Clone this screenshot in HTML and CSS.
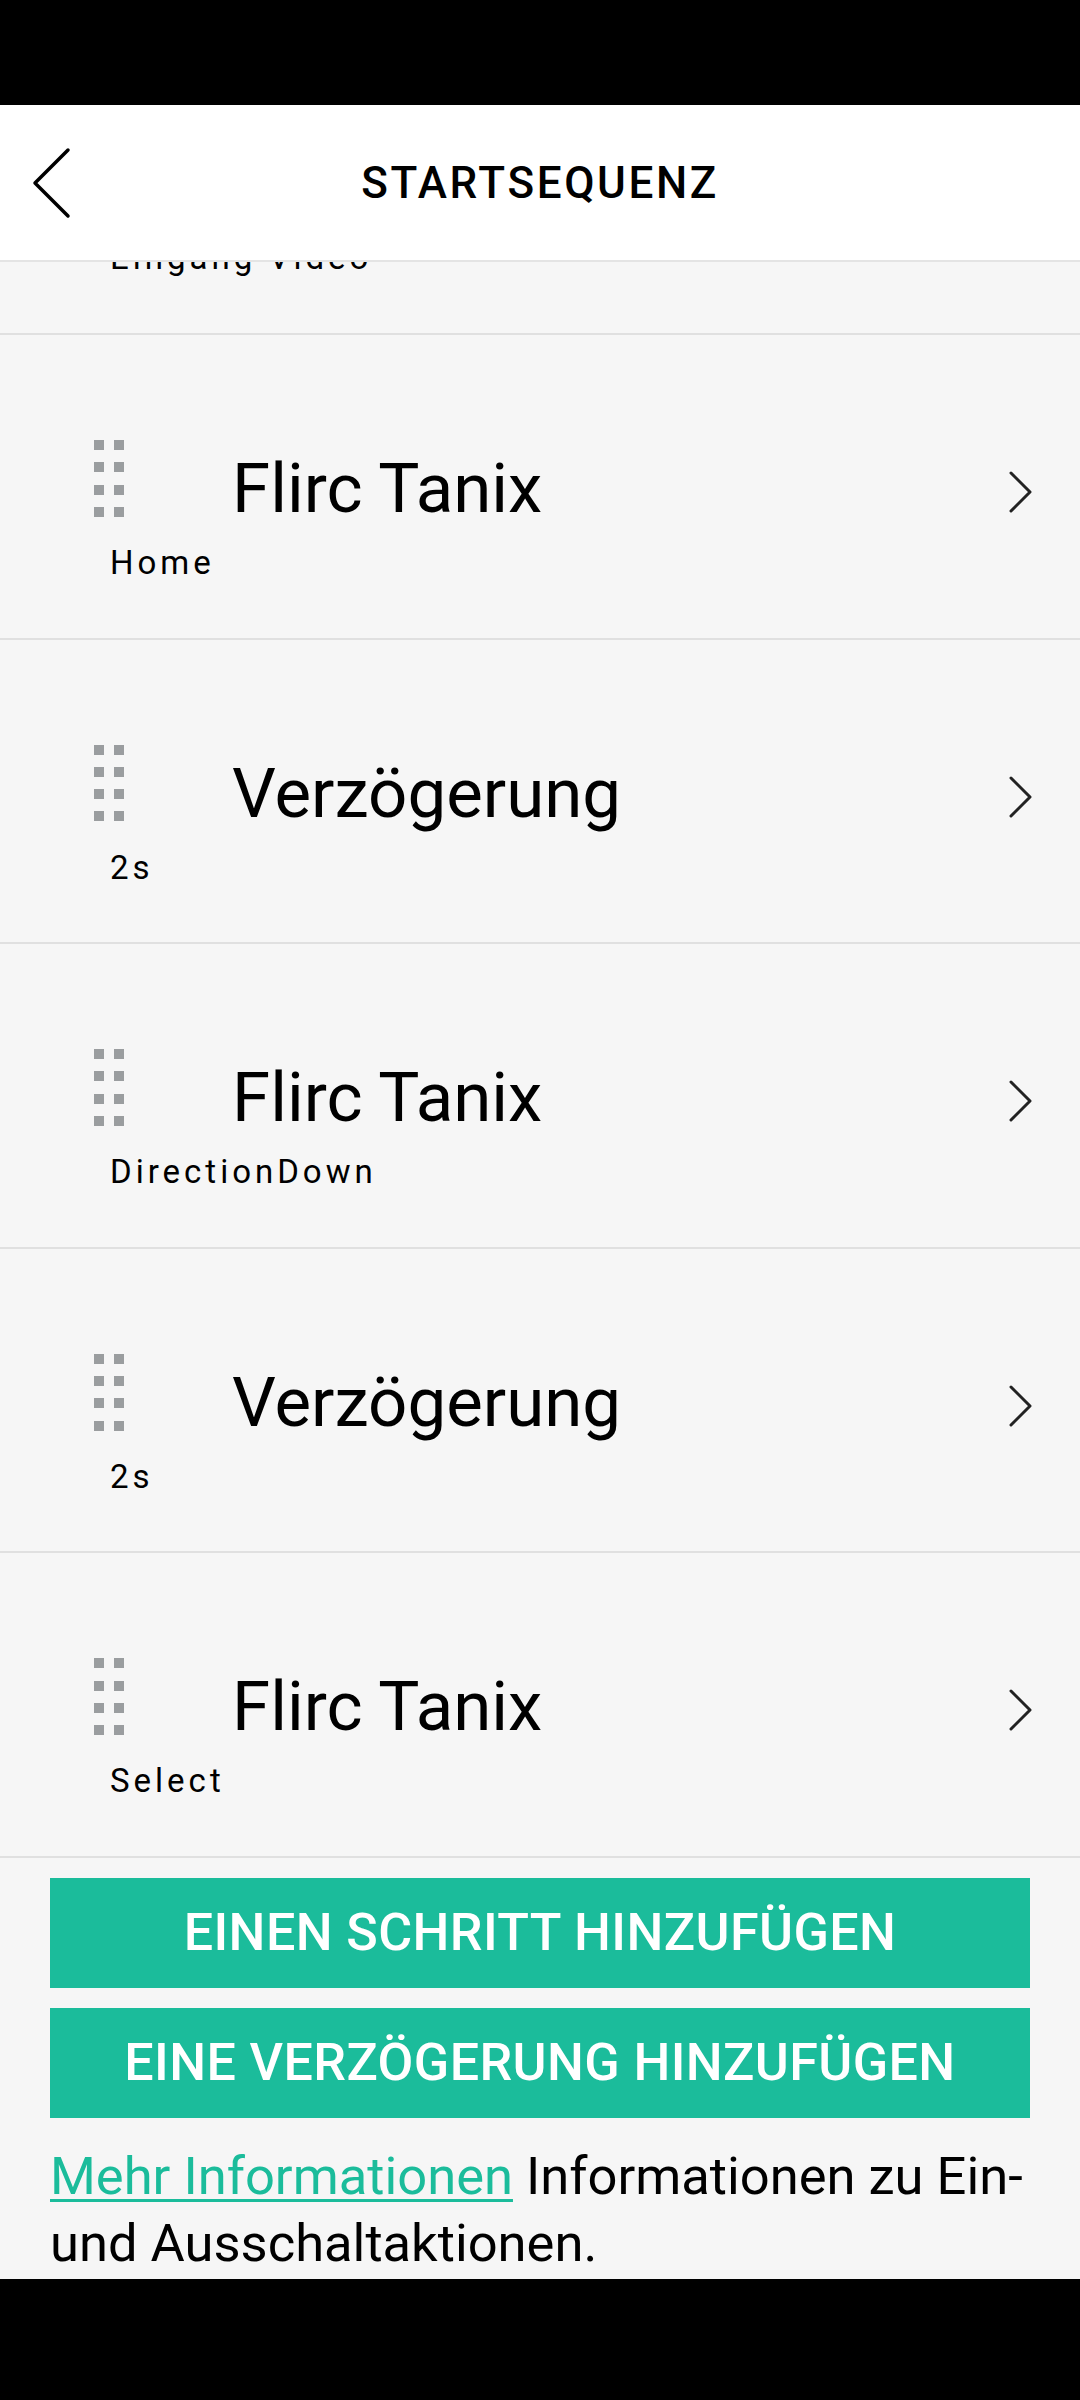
FILE: index.html
```html
<!DOCTYPE html>
<html lang="de">
<head>
  <meta charset="UTF-8">
  <meta name="viewport" content="width=device-width, initial-scale=1.0">
  <title>Startsequenz</title>
  <link rel="stylesheet" href="styles.css">
</head>
<body>
  <div class="status-bar"></div>
  <header class="topbar">
    <button class="back" aria-label="Zurück">
      <svg width="40" height="72" viewBox="0 0 40 72"><polyline points="36,3 3,36 36,69" fill="none" stroke="#000" stroke-width="3.5" stroke-linecap="round" stroke-linejoin="round"/></svg>
    </button>
    <h1>STARTSEQUENZ</h1>
    <span></span>
  </header>
  <main class="content">
    <div class="steps">
      <div class="step">
        <div class="step-main">
          <div class="step-head">
            <div class="handle"><i></i><i></i><i></i><i></i><i></i><i></i><i></i><i></i></div>
            <div class="step-title">Flirc Tanix</div>
          </div>
          <div class="step-sub">Eingang Video</div>
        </div>
        <svg class="chevron" width="26" height="44" viewBox="0 0 26 44"><polyline points="3,3 22,22 3,41" fill="none" stroke="#222" stroke-width="3" stroke-linecap="round" stroke-linejoin="round"/></svg>
      </div>
      <div class="step">
        <div class="step-main">
          <div class="step-head">
            <div class="handle"><i></i><i></i><i></i><i></i><i></i><i></i><i></i><i></i></div>
            <div class="step-title">Flirc Tanix</div>
          </div>
          <div class="step-sub">Home</div>
        </div>
        <svg class="chevron" width="26" height="44" viewBox="0 0 26 44"><polyline points="3,3 22,22 3,41" fill="none" stroke="#222" stroke-width="3" stroke-linecap="round" stroke-linejoin="round"/></svg>
      </div>
      <div class="step">
        <div class="step-main">
          <div class="step-head">
            <div class="handle"><i></i><i></i><i></i><i></i><i></i><i></i><i></i><i></i></div>
            <div class="step-title">Verzögerung</div>
          </div>
          <div class="step-sub">2s</div>
        </div>
        <svg class="chevron" width="26" height="44" viewBox="0 0 26 44"><polyline points="3,3 22,22 3,41" fill="none" stroke="#222" stroke-width="3" stroke-linecap="round" stroke-linejoin="round"/></svg>
      </div>
      <div class="step">
        <div class="step-main">
          <div class="step-head">
            <div class="handle"><i></i><i></i><i></i><i></i><i></i><i></i><i></i><i></i></div>
            <div class="step-title">Flirc Tanix</div>
          </div>
          <div class="step-sub">DirectionDown</div>
        </div>
        <svg class="chevron" width="26" height="44" viewBox="0 0 26 44"><polyline points="3,3 22,22 3,41" fill="none" stroke="#222" stroke-width="3" stroke-linecap="round" stroke-linejoin="round"/></svg>
      </div>
      <div class="step">
        <div class="step-main">
          <div class="step-head">
            <div class="handle"><i></i><i></i><i></i><i></i><i></i><i></i><i></i><i></i></div>
            <div class="step-title">Verzögerung</div>
          </div>
          <div class="step-sub">2s</div>
        </div>
        <svg class="chevron" width="26" height="44" viewBox="0 0 26 44"><polyline points="3,3 22,22 3,41" fill="none" stroke="#222" stroke-width="3" stroke-linecap="round" stroke-linejoin="round"/></svg>
      </div>
      <div class="step">
        <div class="step-main">
          <div class="step-head">
            <div class="handle"><i></i><i></i><i></i><i></i><i></i><i></i><i></i><i></i></div>
            <div class="step-title">Flirc Tanix</div>
          </div>
          <div class="step-sub">Select</div>
        </div>
        <svg class="chevron" width="26" height="44" viewBox="0 0 26 44"><polyline points="3,3 22,22 3,41" fill="none" stroke="#222" stroke-width="3" stroke-linecap="round" stroke-linejoin="round"/></svg>
      </div>
    </div>
    <div class="actions">
      <button class="btn">EINEN SCHRITT HINZUFÜGEN</button>
      <button class="btn">EINE VERZÖGERUNG HINZUFÜGEN</button>
    </div>
    <p class="info"><a href="#">Mehr Informationen</a> Informationen zu Ein- und Ausschaltaktionen.</p>
  </main>
  <div class="nav-bar"></div>
</body>
</html>
```

FILE: styles.css
```css
body {
  margin: 0;
  width: 1080px;
  height: 2400px;
  overflow: hidden;
  display: flex;
  flex-direction: column;
  font-family: Roboto, "Liberation Sans", sans-serif;
  background: #f6f6f6;
  color: #000;
}
.status-bar {
  height: 105px;
  background: #000;
}
.topbar {
  height: 155px;
  background: #fff;
  border-bottom: 2px solid #e4e4e4;
  display: grid;
  grid-template-columns: 1fr auto 1fr;
  align-items: center;
}
.back {
  justify-self: start;
  margin-left: 32px;
  padding: 0;
  border: none;
  background: none;
  display: flex;
}
.topbar h1 {
  margin: 0;
  font-size: 44px;
  font-weight: 500;
  letter-spacing: 2.6px;
}
.content {
  flex: 1;
  overflow: hidden;
}
.steps {
  margin-top: -231.6px;
}
.step {
  height: 197.6px;
  border-bottom: 2px solid #e0e0e0;
  display: flex;
  align-items: flex-start;
  padding: 105px 46px 0 94px;
}
.step-main {
  flex: 1;
}
.step-head {
  display: flex;
  align-items: flex-start;
}
.handle {
  display: grid;
  grid-template-columns: repeat(2, 10px);
  column-gap: 10px;
  row-gap: 12.3px;
}
.handle i {
  width: 10px;
  height: 10px;
  background: #9a9d9f;
}
.step-title {
  margin: 14px 0 0 108px;
  font-size: 69px;
  line-height: 70px;
}
.step-sub {
  margin: 22px 0 0 16px;
  font-size: 33px;
  line-height: 33px;
  letter-spacing: 4px;
}
.chevron {
  margin-top: 30px;
}
.actions {
  display: flex;
  flex-direction: column;
  gap: 20px;
  padding: 20px 50px 0;
}
.btn {
  height: 110px;
  border: none;
  background: #1bbc9b;
  color: #fff;
  font-family: Roboto, "Liberation Sans", sans-serif;
  font-size: 52px;
  font-weight: 500;
  letter-spacing: 0.4px;
}
.info {
  margin: 25px 50px 0;
  font-size: 52.5px;
  line-height: 67px;
}
.info a {
  color: #1bbc9b;
  text-decoration-thickness: 3px;
  text-underline-offset: 5px;
}
.nav-bar {
  height: 121px;
  background: #000;
}
```
